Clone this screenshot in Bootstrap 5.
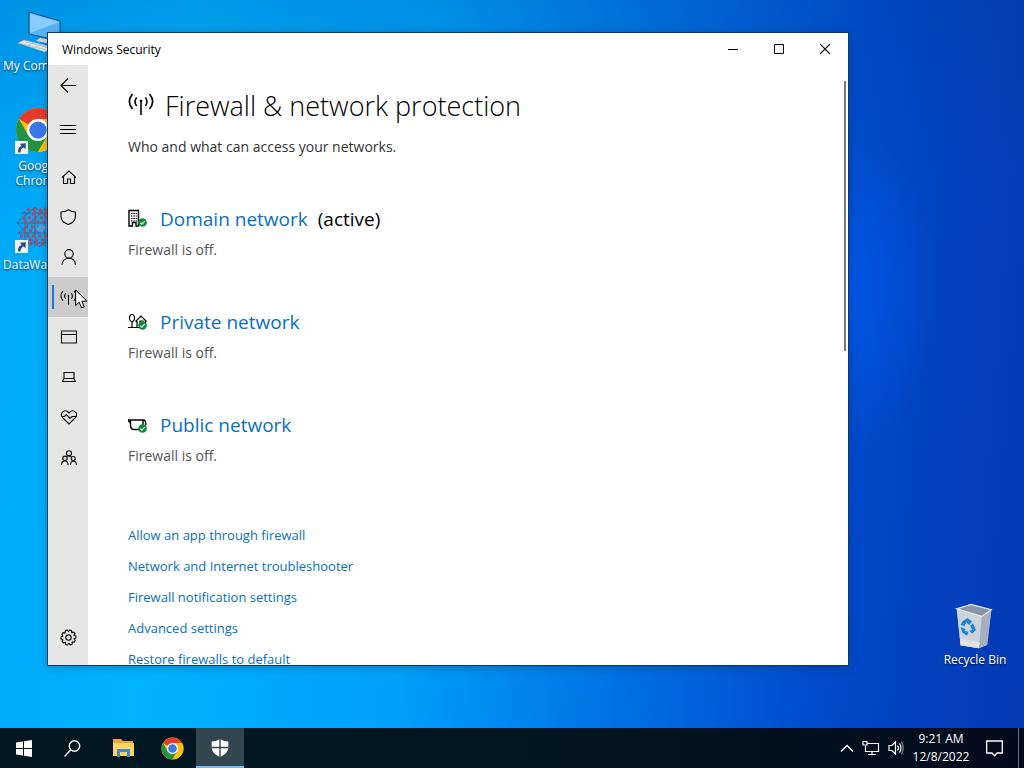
<!DOCTYPE html>
<html lang="en">
<head>
<meta charset="utf-8">
<meta name="viewport" content="width=device-width, initial-scale=1">
<title>Windows Security</title>
<link href="https://cdn.jsdelivr.net/npm/bootstrap@5.3.0/dist/css/bootstrap.min.css" rel="stylesheet">
<style>
  body { font-family: "Open Sans", "Noto Sans", sans-serif; font-size: 14px; color: #000; }
  svg { display: block; flex: none; }
  .ln { fill: none; stroke: currentColor; stroke-width: 1.15; }
  .desktop {
    background:
      radial-gradient(ellipse 90px 160px at 848px 290px, rgba(0,100,255,.45), rgba(0,100,255,0)),
      linear-gradient(180deg, rgba(0,60,140,.2), rgba(0,60,140,0) 30%),
      linear-gradient(95deg, #00a8fa 0%, #00b2ff 18%, #00a0fa 42%, #0072e6 62%, #004cce 80%, #043fbc 92%, #043ab4 100%);
  }
  .shortcut { width: 76px; font-size: 12px; line-height: 15px; color: #fff; text-shadow: 0 1px 2px rgba(0,0,0,.7); }
  .shortcut:hover { color: #fff; }
  .label-start { align-self: flex-start; padding-left: 3px; }
  .pc { left: 0; top: 9px; }
  .chrome { left: 0; top: 106px; }
  .wagon { left: 0; top: 205px; }
  .bin { right: 11px; bottom: 61px; }
  .app { left: 48px; right: 176px; top: 33px; bottom: 63px; box-shadow: 0 0 0 1px #0b3c66, 0 2px 10px rgba(0,0,0,.25); }
  .titlebar { height: 32px; font-size: 12px; padding-left: 14px; }
  .titlebar span { padding-top: 2px; }
  .caption { width: 46px; }
  .rail { width: 40px; background: #e6e6e6; padding-bottom: 8px; }
  .tool { width: 40px; height: 40px; color: #111; }
  .tool.active { background: #cccccc; }
  .marker { left: 4px; top: 8px; width: 2px; height: 24px; background: #1a78d0; }
  .pointer { left: 27px; top: 12px; z-index: 2; }
  .pane { padding: 23px 40px 0; }
  .pane a { color: #0a70c2; }
  h1 { font-size: 27px; font-weight: 300; line-height: 36px; gap: 11px; }
  .intro { font-size: 14px; line-height: 20px; color: #333; margin-top: 13px; }
  .profile { margin-top: 48px; }
  .profile h2 { font-size: 19px; font-weight: 400; line-height: 28px; gap: 12px; }
  .profile h2 span { margin-left: -2px; }
  .profile p { line-height: 20px; color: #555; margin-top: 7px; }
  .links { font-size: 13px; line-height: 31px; margin-top: 54px; }
  .thumb { right: 2px; top: 16px; width: 2px; height: 45%; background: #777; }
  .taskbar { height: 40px; background: linear-gradient(90deg, #021722, #031420 60%, #020b1c); color: #fff; }
  .task { width: 48px; height: 40px; color: #fff; }
  .task.on { background: #33454f; box-shadow: inset 0 -2px #7fb8ea; }
  .clock { font-size: 12px; line-height: 18px; width: 58px; }
  .peek { width: 6px; }
</style>
</head>
<body class="vh-100 d-flex flex-column overflow-hidden">

<svg width="0" height="0" class="position-absolute" aria-hidden="true">
  <defs>
    <symbol id="chrome" viewBox="0 0 48 48">
      <circle cx="24" cy="24" r="23" fill="#fbc116"/>
      <path d="M24 24 4.1 12.5A23 23 0 0 1 43.9 12.5Z" fill="#e33b2e"/>
      <path d="M4.1 12.5A23 23 0 0 0 24 47L34 29.700 14 29.700Z" fill="#229342"/>
      <path d="M24 12.5H43.9A23 23 0 0 1 24 47L34 29.5Z" fill="#fbc116"/>
      <circle cx="24" cy="24" r="11.5" fill="#fff"/><circle cx="24" cy="24" r="9" fill="#3b78e7"/>
    </symbol>
    <symbol id="antenna" viewBox="0 0 26 22">
      <g fill="none" stroke="currentColor" stroke-width="1.6">
        <path d="M13 7V22"/><path d="M8.7 4.5Q5.3 8.5 8.7 13M17.3 4.5Q20.7 8.5 17.3 13M4.5 1Q-1.8 8.5 4.5 16M21.5 1Q27.8 8.5 21.5 16"/>
      </g><circle cx="13" cy="8" r="1.3"/>
    </symbol>
    <symbol id="okmark" viewBox="0 0 10 10">
      <circle cx="5" cy="5" r="4.8" fill="#10893e"/><path d="M2.6 5.2 4.3 6.8 7.4 3.5" fill="none" stroke="#fff" stroke-width="1.2"/>
    </symbol>
    <symbol id="goto" viewBox="0 0 12 12">
      <path d="M0 0H12V12H0Z" fill="#f4f4f4"/><path d="M3 10.5Q2 6 6 4.5L4.5 2.5 10 2 9.8 7.5 8 6Q5 7 5.2 10.5Z" fill="#2b4f8e"/>
    </symbol>
  </defs>
</svg>

<main class="desktop position-relative flex-grow-1">
  <a href="#" class="shortcut pc position-absolute d-flex flex-column align-items-center text-decoration-none text-center">
    <svg width="48" height="49" viewBox="0 0 48 49">
      <path d="M15 3 46 12V32L15 25Z" fill="#58b4f7" stroke="#1b4c78"/><path d="M16 4.5 45 13 16 24Z" fill="#8accfb"/>
      <path d="M26 29 38 31V35L22 32Z" fill="#cfd8de"/><path d="M4 34 10 31 38 38 31 43Z" fill="#e9edf0" stroke="#9babb5" stroke-width=".6"/>
      <path d="M7 34.5 31 40.5M11 32.8 34 38.6M13 37 20 33.5M20 38.6 27 35.4" stroke="#9fb0ba" stroke-width=".7"/>
    </svg>
    <span class="label-start text-nowrap">My Computer</span>
  </a>
  <a href="#" class="shortcut chrome position-absolute d-flex flex-column align-items-center text-decoration-none text-center">
    <span class="position-relative"><svg width="46" height="48"><use href="#chrome"/></svg>
      <svg class="position-absolute start-0 bottom-0" width="13" height="13"><use href="#goto"/></svg></span>
    <span class="mt-1">Google Chrome</span>
  </a>
  <a href="#" class="shortcut wagon position-absolute d-flex flex-column align-items-center text-decoration-none text-center">
    <span class="position-relative"><svg width="46" height="48" viewBox="0 0 46 48">
        <g fill="none" stroke="#3d6394" stroke-width=".9"><path d="M6 8H44M2 18H44M2 28H44M6 38H44M10 6V42M20 2V42M30 2V42M38 2V42M2 18 20 2 44 24 24 42ZM4 28 30 4 44 18"/></g>
        <g fill="none" stroke="#b8465c" stroke-width="3" stroke-dasharray="3 3"><path d="M12 5H42M7 13H42M10 22H42M5 31H42M14 39H42M17 9H42M8 26H42M14 35H42M9 17H42"/></g>
        <path d="M25 19 31 22 27 28 21 25Z" fill="#4fa0dd"/>
      </svg>
      <svg class="position-absolute start-0 bottom-0" width="13" height="13"><use href="#goto"/></svg></span>
    <span class="label-start mt-1">DataWagon</span>
  </a>
  <a href="#" class="shortcut bin position-absolute d-flex flex-column align-items-center text-decoration-none text-center">
    <svg width="48" height="50" viewBox="0 0 48 52">
      <path d="M5 7 41 8 36 45 28 48 9 45Z" fill="#bcc5cf"/><path d="M5 7 31 15 28 48 9 45Z" fill="#cdd3da"/>
      <path d="M31 15 41 8 37 44 28 48Z" fill="#a5afbd"/><path d="M5 7 20 2.5 41 8 31 15Z" fill="#8795a7" stroke="#e8edf2" stroke-width="1.2"/>
      <path d="M8.5 38 29 42 28 48 9 45Z" fill="#e4e2df"/>
      <g fill="#1486d8"><path d="M11 20 16 17 21 20 18 24 15 21 13 25 9 24Z"/><path d="M19 25 22 22 25 29 21 33 18 30 21 29Z"/><path d="M9 26 14 28 13 30 17 31 16 35 11 32Z"/></g>
    </svg>
    <span class="text-nowrap">Recycle Bin</span>
  </a>

  <section class="app position-absolute bg-white d-flex flex-column">
    <header class="titlebar d-flex align-items-stretch flex-shrink-0">
      <span class="me-auto align-self-center">Windows Security</span>
      <button class="caption btn rounded-0 border-0 p-0 d-flex justify-content-center align-items-center" aria-label="Minimize"><svg width="11" height="11"><path d="M0 5.5H10" stroke="#000"/></svg></button>
      <button class="caption btn rounded-0 border-0 p-0 d-flex justify-content-center align-items-center" aria-label="Maximize"><svg width="11" height="11"><path d="M.5.5H9.5V9.5H.5Z" fill="none" stroke="#000"/></svg></button>
      <button class="caption btn rounded-0 border-0 p-0 d-flex justify-content-center align-items-center" aria-label="Close"><svg width="11" height="11"><path d="M0 0 10 10M10 0 0 10" stroke="#000" stroke-width="1.1"/></svg></button>
    </header>
    <div class="d-flex flex-grow-1 overflow-hidden">
      <nav class="rail d-flex flex-column flex-shrink-0" aria-label="Sections">
        <button class="tool btn rounded-0 border-0 p-0 d-flex justify-content-center align-items-center mb-1" aria-label="Back"><svg class="ln" width="16" height="16"><path d="M16 8.5H1M8 1.500 1 8.500 8 15.500"/></svg></button>
        <button class="tool btn rounded-0 border-0 p-0 d-flex justify-content-center align-items-center mb-2" aria-label="Menu"><svg width="16" height="11"><path d="M0 1.5H16M0 5.5H16M0 9.5H16" stroke="#000"/></svg></button>
        <button class="tool btn rounded-0 border-0 p-0 d-flex justify-content-center align-items-center" aria-label="Home"><svg class="ln" width="16" height="16"><path d="M2 8.500 9 2 16 8.500M3.500 7.500V14.500H7.500V10H10.500V14.500H14.500V7.500"/></svg></button>
        <button class="tool btn rounded-0 border-0 p-0 d-flex justify-content-center align-items-center" aria-label="Virus protection"><svg class="ln" width="16" height="16"><path d="M8.300 .7C6 2.300 3.500 3 1 3V7.500C1 11.500 4 14 8.300 15.500 12.500 14 15.400 11.500 15.400 7.500V3C13 3 10.500 2.300 8.300 .7Z"/></svg></button>
        <button class="tool btn rounded-0 border-0 p-0 d-flex justify-content-center align-items-center" aria-label="Account protection"><svg class="ln" width="16" height="16"><circle cx="9" cy="4.800" r="4.200"/><path d="M2 15.800C2.300 11.500 5.500 9.200 9 9.200S15.200 11.500 15.500 15.800"/></svg></button>
        <div class="position-relative">
          <button class="tool active btn rounded-0 border-0 p-0 d-flex justify-content-center align-items-center" aria-label="Firewall and network protection"><svg width="17" height="15"><use href="#antenna"/></svg></button>
          <span class="marker position-absolute"></span>
          <svg class="pointer position-absolute" width="13" height="20" viewBox="0 0 13 20"><path d="M.6.9V16.5L4.2 13.2 6.6 18.9 9.2 17.8 6.8 12.2H11.9Z" fill="#fff" stroke="#000"/></svg>
        </div>
        <button class="tool btn rounded-0 border-0 p-0 d-flex justify-content-center align-items-center" aria-label="App and browser control"><svg class="ln" width="17" height="14"><path d="M1.500 1H16.500V13H1.500ZM1.500 4.500H16.500"/></svg></button>
        <button class="tool btn rounded-0 border-0 p-0 d-flex justify-content-center align-items-center" aria-label="Device security"><svg class="ln" width="16" height="12"><path d="M4 7.500V1.500H14V7.500M4 7.500H14L15.500 10.500H2.500Z"/></svg></button>
        <button class="tool btn rounded-0 border-0 p-0 d-flex justify-content-center align-items-center" aria-label="Device health"><svg class="ln" width="17" height="15"><path d="M2.500 7.500C-.5 4 3.500-1 7.500 1.500L9 3 10.500 1.500C14.500-1 18.500 4 15.500 7.500L9 14 2.500 7.500M1.500 6.500H4.500L6.500 4.500 10 8.500 12 6.500H16"/></svg></button>
        <button class="tool btn rounded-0 border-0 p-0 d-flex justify-content-center align-items-center" aria-label="Family options"><svg class="ln" width="17" height="18" viewBox="0 -2 17 18"><circle cx="9" cy="3.200" r="2.500"/><circle cx="5" cy="8.300" r="2.200"/><circle cx="13.200" cy="8.500" r="2"/><path d="M1.500 15C1.500 9.500 8 9.500 8 15M10.500 15C10.500 10 16.400 10 16.400 15M6.500 6.500Q9 5 11.500 7"/></svg></button>
        <button class="tool btn rounded-0 border-0 p-0 d-flex justify-content-center align-items-center mt-auto" aria-label="Settings"><svg class="ln" width="17" height="17"><circle cx="8.500" cy="8.500" r="2.700"/><path stroke-linejoin="round" d="M7.3 1 8.500 2.700 9.7 1 11.600 1.600 11.700 3.600 13.700 3 15 4.600 13.800 6.300 15.900 7 16 9 14 9.700 15.200 11.500 14.200 13.300 12.200 12.900 12.200 15 10.400 15.900 9 14.300 7.700 16 5.700 15.500 5.500 13.400 3.500 14 2 12.400 3 10.700 1 9.900 1 7.800 2.900 7.200 1.900 5.300 3 3.600 5 4.100 5.200 1.900Z"/></svg></button>
      </nav>

      <div class="pane position-relative flex-grow-1 overflow-hidden">
        <h1 class="d-flex m-0"><svg class="mt-1" width="26" height="24"><use href="#antenna"/></svg><span>Firewall &amp; network protection</span></h1>
        <p class="intro mb-0">Who and what can access your networks.</p>

        <section class="profile">
          <h2 class="d-flex align-items-center m-0">
            <svg width="20" height="20" viewBox="0 0 20 20"><path d="M1 17V1.500H10.500V17H8V13.500H4.500V17Z" fill="#fff" stroke="#000" stroke-width="1.400"/><path d="M3 4.500H9.500M3 7H9.500M3 9.500H9.500M3 12H9.500" stroke="#000" stroke-width="1.2" stroke-dasharray="1.500 .8"/><use href="#okmark" x="10" y="9" width="9" height="9"/></svg>
            <a href="#" class="text-decoration-none">Domain network</a><span>(active)</span>
          </h2>
          <p class="mb-0">Firewall is off.</p>
        </section>
        <section class="profile">
          <h2 class="d-flex align-items-center m-0">
            <svg width="20" height="20" viewBox="0 0 20 20"><g fill="none" stroke="#000" stroke-width="1.2"><ellipse cx="4" cy="6" rx="2.500" ry="3.500"/><path d="M4 9.500V15.500M0 15.500H13M7.500 9.500 13 4 18.500 9.500M9 9V15.500M17.500 9V12M12 11V9H15V11"/></g><use href="#okmark" x="10" y="9" width="9" height="9"/></svg>
            <a href="#" class="text-decoration-none">Private network</a>
          </h2>
          <p class="mb-0">Firewall is off.</p>
        </section>
        <section class="profile">
          <h2 class="d-flex align-items-center m-0">
            <svg width="20" height="20" viewBox="0 0 20 20"><path d="M0 5H16Q18.500 6 17.500 10.500M2.500 5V10.500Q2.500 14 5.500 14.500H11M15 5V10M0 5.500 2.500 8" fill="none" stroke="#000" stroke-width="1.400"/><use href="#okmark" x="10" y="9" width="9" height="9"/></svg>
            <a href="#" class="text-decoration-none">Public network</a>
          </h2>
          <p class="mb-0">Firewall is off.</p>
        </section>

        <ul class="links list-unstyled mb-0">
          <li><a href="#" class="text-decoration-none">Allow an app through firewall</a></li>
          <li><a href="#" class="text-decoration-none">Network and Internet troubleshooter</a></li>
          <li><a href="#" class="text-decoration-none">Firewall notification settings</a></li>
          <li><a href="#" class="text-decoration-none">Advanced settings</a></li>
          <li><a href="#" class="text-decoration-none">Restore firewalls to default</a></li>
        </ul>
        <span class="thumb position-absolute"></span>
      </div>
    </div>
  </section>
</main>

<footer class="taskbar d-flex align-items-center flex-shrink-0">
  <button class="task btn rounded-0 border-0 p-0 d-flex justify-content-center align-items-center" aria-label="Start"><svg width="17" height="17" fill="#fff"><path d="M0 2.4 7 1.4V8H0ZM8 1.2 16 0V8H8ZM0 9H7V15.6L0 14.6ZM8 9H16V17L8 15.8Z"/></svg></button>
  <button class="task btn rounded-0 border-0 p-0 d-flex justify-content-center align-items-center" aria-label="Search"><svg width="17" height="17"><g fill="none" stroke="#fff" stroke-width="1.4"><circle cx="10.500" cy="6" r="5.200"/><path d="M6.700 9.800.6 16.400"/></g></svg></button>
  <button class="task btn rounded-0 border-0 p-0 d-flex justify-content-center align-items-center ms-1" aria-label="File Explorer"><svg width="22" height="18"><path d="M0 0H8L10 2H20V5H0Z" fill="#e8a92e"/><path d="M0 4H21V17H0Z" fill="#fcd462"/><path d="M4 18V10H17V18H14V13H7V18Z" fill="#3b8fc9"/></svg></button>
  <button class="task btn rounded-0 border-0 p-0 d-flex justify-content-center align-items-center" aria-label="Google Chrome"><svg width="23" height="23"><use href="#chrome"/></svg></button>
  <button class="task on btn rounded-0 border-0 p-0 d-flex justify-content-center align-items-center" aria-label="Windows Security"><svg width="18" height="18"><path d="M9 0C6.5 1.7 3.5 2.5.7 2.5V8C.7 13 4.5 16 9 18 13.5 16 17.3 13 17.3 8V2.5C14.5 2.5 11.5 1.7 9 0Z" fill="#fff"/><path d="M9 0V18M.7 8.5H17.3" stroke="#33454f" stroke-width="1.4"/></svg></button>

  <div class="d-flex align-items-center ms-auto">
    <svg class="me-2" width="14" height="10"><path d="M1 8.5 7 2.5 13 8.5" fill="none" stroke="#fff" stroke-width="1.4"/></svg>
    <svg class="me-2" width="18" height="16"><path d="M5.5 3.5H16.5V11.5H3.5V6M10 11.5V14.5M6 14.5H14M1 1.5H5V5H1Z" fill="none" stroke="#fff" stroke-width="1.2"/></svg>
    <svg class="me-2" width="16" height="16"><g fill="none" stroke="#fff" stroke-width="1.2"><path d="M1 5.5H4L7.5 2V14L4 10.5H1ZM9.5 5.5Q11.5 8 9.5 10.5M11.500 3.500Q14.500 8 11.500 12.500"/><path d="M13.500 2Q17 8 13.500 14" opacity=".5"/></g></svg>
    <time class="clock text-center" datetime="2022-12-08T09:21">9:21 AM<br>12/8/2022</time>
    <button class="task btn rounded-0 border-0 p-0 d-flex justify-content-center align-items-center" aria-label="Notifications"><svg width="17" height="17"><path d="M.7 1H16.300V13H11L8.500 15.800 6 13H.7Z" fill="none" stroke="#fff" stroke-width="1.300"/></svg></button>
    <span class="peek border-start border-secondary align-self-stretch"></span>
  </div>
</footer>

<script src="https://cdn.jsdelivr.net/npm/bootstrap@5.3.0/dist/js/bootstrap.bundle.min.js"></script>
</body>
</html>
